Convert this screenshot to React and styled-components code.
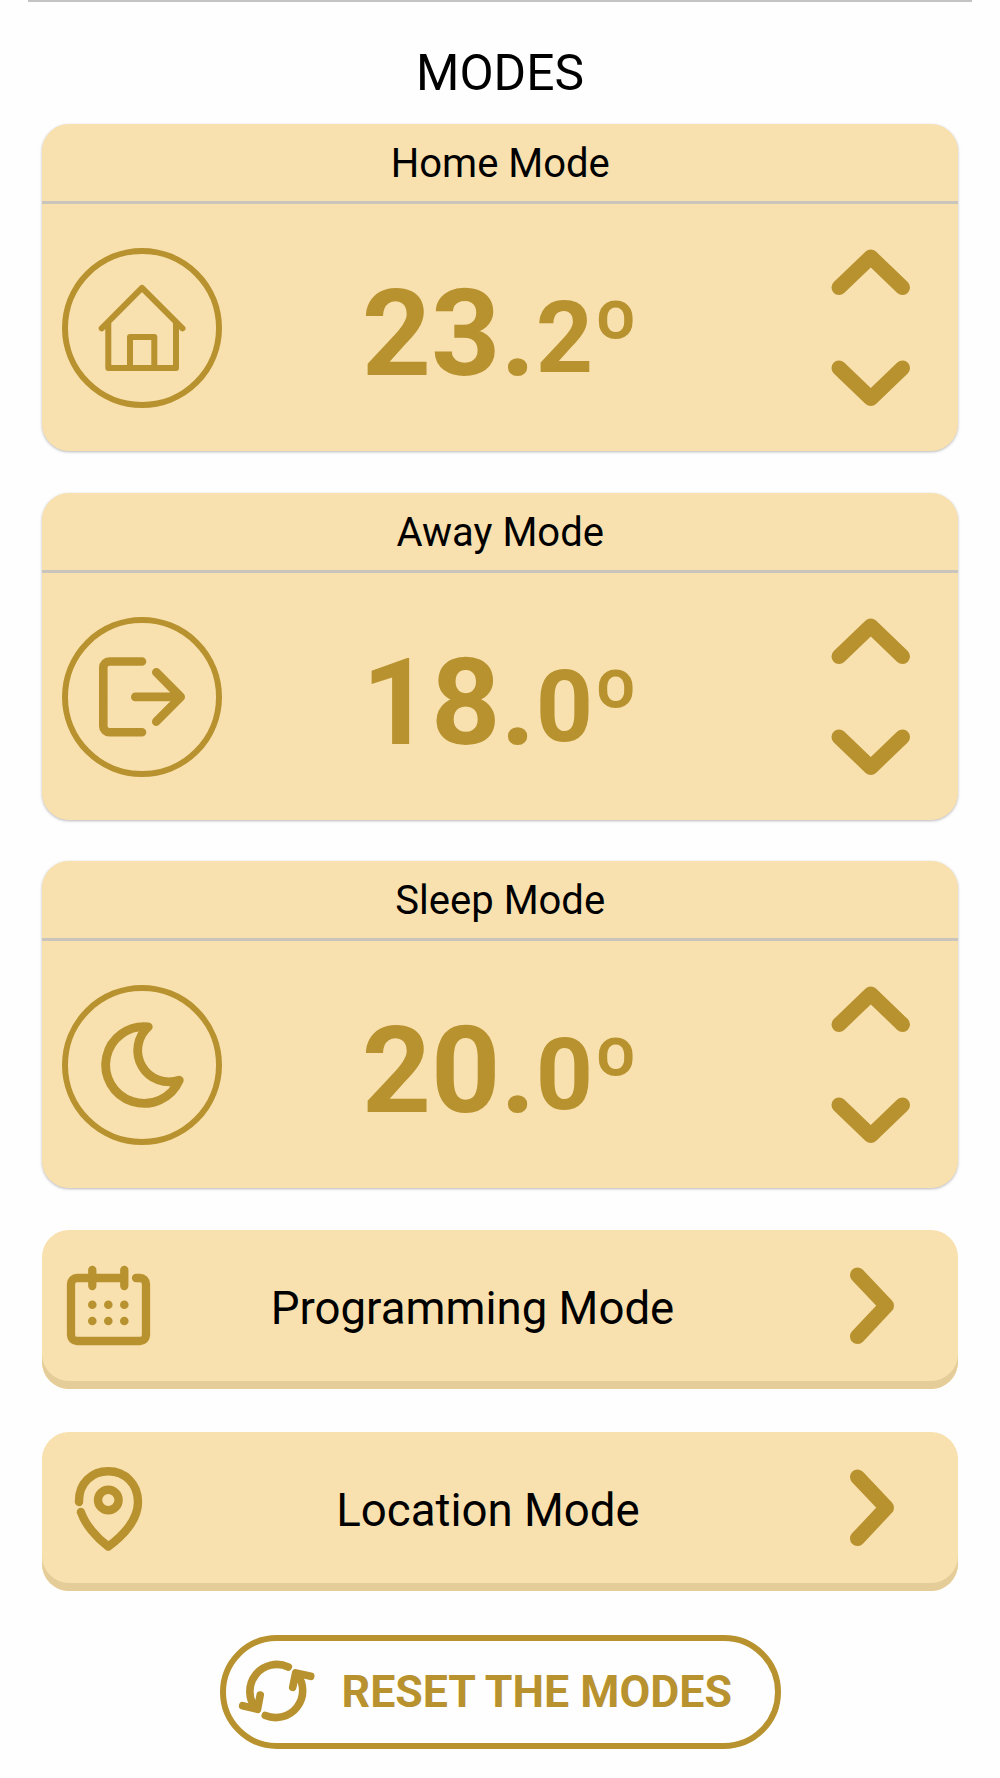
import React, { useState } from 'react';

import styled, { createGlobalStyle } from 'styled-components';

const gold = '#b8922f';
const sand = '#f9e1af';

const GlobalStyle = createGlobalStyle`
  body {
    margin: 0;
    background-color: #fefefe;
    color: #000;
    font-family: Roboto, "Liberation Sans", sans-serif;
  }
  * {
    box-sizing: border-box;
  }
`;

const Page = styled.main`
  display: flex;
  flex-direction: column;
  width: 1000px;
  height: 1778px;
  overflow: hidden;
`;

const TopLine = styled.div`
  flex: none;
  height: 2px;
  margin: 0 28px;
  background-color: #c4c4c4;
`;

const Title = styled.h1`
  margin: 42px 0 21.1px;
  font-size: 49.7px;
  line-height: 59px;
  font-weight: 400;
  text-align: center;
`;

const Cards = styled.section`
  display: flex;
  flex-direction: column;
  gap: 41.5px;
  padding: 0 42px 0 41.5px;
`;

const Card = styled.article`
  height: 327px;
  border-radius: 27px;
  background-color: ${sand};
  box-shadow: 0 1px 3px rgba(0, 0, 0, 0.28);
`;

const CardTitle = styled.h2`
  height: 80px;
  margin: 0;
  padding: 1px 0 0 1px;
  border-bottom: 3px solid #c9c5bd;
  font-size: 40px;
  line-height: 77px;
  font-weight: 400;
  text-align: center;
`;

const CardBody = styled.div`
  display: grid;
  grid-template-columns: 180px 1fr 180px;
  align-items: center;
  height: 247px;
  padding: 1px 20.5px 0;
`;

const ModeIcon = styled.div`
  display: flex;
  width: 160px;
  height: 160px;
  border: 6px solid ${gold};
  border-radius: 50%;

  svg {
    flex: none;
    margin: -6px;
  }
`;

const Temperature = styled.div`
  display: flex;
  justify-content: center;
  align-items: baseline;
  padding: 19px 0 0 1px;
  color: ${gold};
  font-weight: 700;
  font-size: 121px;
  line-height: 142px;
`;

const Decimal = styled.span`
  position: relative;
  top: -3px;
  font-size: 100px;
`;

const Arrows = styled.div`
  display: flex;
  flex-direction: column;
  align-items: center;
  gap: 64px;
  padding-left: 46px;
`;

const ArrowButton = styled.button`
  display: flex;
  padding: 0;
  border: 0;
  background: none;
  cursor: pointer;
`;

const Links = styled.nav`
  display: flex;
  flex-direction: column;
  gap: 43.5px;
  padding: 41.5px 42px 0;
`;

const LinkButton = styled.button`
  display: grid;
  grid-template-columns: 96px 1fr 154px;
  align-items: center;
  height: 159px;
  padding: 0 0 4px 18px;
  border: 0;
  border-radius: 27px;
  background-color: ${sand};
  box-shadow: inset 0 -8px 0 #e5cd9a;
  color: #000;
  font-family: inherit;
  font-size: 45.6px;
  cursor: pointer;

  > svg:last-child {
    justify-self: center;
    margin: 0 18px 5px 0;
  }
`;

const LinkLabel = styled.span`
  padding-top: 2px;
  padding-left: ${({ $short }) => ($short ? 16 : 0)}px;
  padding-right: ${({ $short }) => ($short ? 0 : 15)}px;
  white-space: nowrap;
`;

const ResetButton = styled.button`
  display: flex;
  align-items: center;
  align-self: center;
  width: 561px;
  height: 114px;
  margin-top: 43.5px;
  padding: 0 0 0 10px;
  border: 6px solid ${gold};
  border-radius: 57px;
  background: none;
  color: ${gold};
  font-family: inherit;
  font-weight: 700;
  font-size: 44.7px;
  cursor: pointer;

  svg {
    margin-right: 24px;
  }
`;

const Icon = ({ width, height, stroke, children }) => (
  <svg width={width} height={height} viewBox={`0 0 ${width} ${height}`} fill="none" stroke={gold}
    strokeWidth={stroke} strokeLinecap="round" strokeLinejoin="round">
    {children}
  </svg>
);

const House = () => (
  <Icon width={160} height={160} stroke={6}>
    <path d="M39.7 80.3L80 39.9l40.5 40.4M46.3 75v45H114V75M68 120V89h24.3v31" />
  </Icon>
);

const Exit = () => (
  <Icon width={160} height={160} stroke={8.6}>
    <path d="M80 44.5H47.3a6 6 0 0 0-6 6v58.8a6 6 0 0 0 6 6H80M73.3 79.9h45.2M94.3 55.3L118.7 79.9 94.3 104.6" />
  </Icon>
);

const Moon = () => (
  <Icon width={160} height={160} stroke={8.8}>
    <path d="M86.3 41.8A38.4 38.4 0 1 0 117.3 95.2A31.5 31.5 0 0 1 86.3 41.8Z" />
  </Icon>
);

const Calendar = () => (
  <Icon width={96} height={96} stroke={8.3}>
    <path d="M63 19H17a6 6 0 0 0-6 6v51a6 6 0 0 0 6 6h63a6 6 0 0 0 6-6V25a6 6 0 0 0-6-6h-4M32.3 11v16M64.3 11v16" />
    {[45.7, 62].map(y => [32.3, 48.3, 64.3].map(x => (
      <circle key={`${x}-${y}`} cx={x} cy={y} r="4.3" fill={gold} stroke="none" />
    )))}
  </Icon>
);

const Pin = () => (
  <Icon width={96} height={96} stroke={8.4}>
    <path d="M19 40C18.5 21 32 9.3 48.3 9.3C65 9.3 78 22 78 40C78 58 63 74 48.3 84.5C36 75.5 25 62 20.9 50" />
    <circle cx="48.3" cy="38" r="10.3" />
  </Icon>
);

const Refresh = () => (
  <Icon width={82} height={70} stroke={7.6}>
    <path d="M52.3 10A27 27 0 0 0 19.5 51M6.7 48.7L21.5 52.3L24.2 38" />
    <path d="M29.3 58.5A27 27 0 0 0 61 17M56.7 30.3L59.7 15.9L74.7 19.3" />
  </Icon>
);

const Up = () => (
  <Icon width={80} height={47} stroke={15}>
    <path d="M8 38.5L39.8 8L71.5 38.5" />
  </Icon>
);

const Down = () => (
  <Icon width={80} height={47} stroke={15}>
    <path d="M8 8L39.8 38.5L71.5 8" />
  </Icon>
);

const Right = () => (
  <Icon width={46} height={78} stroke={15}>
    <path d="M8.5 9L37.5 39.7L8.5 70.5" />
  </Icon>
);

const modes = [
  { name: 'Home Mode', icon: <House />, start: 232 },
  { name: 'Away Mode', icon: <Exit />, start: 180 },
  { name: 'Sleep Mode', icon: <Moon />, start: 200 },
];

const ModeCard = ({ name, icon, start }) => {
  // kept in tenths of a degree
  const [temp, setTemp] = useState(start);
  return (
    <Card>
      <CardTitle>{name}</CardTitle>
      <CardBody>
        <ModeIcon>{icon}</ModeIcon>
        <Temperature>
          <span>{Math.floor(temp / 10)}.</span>
          <Decimal>{temp % 10}º</Decimal>
        </Temperature>
        <Arrows>
          <ArrowButton onClick={() => setTemp(temp + 1)}><Up /></ArrowButton>
          <ArrowButton onClick={() => setTemp(temp - 1)}><Down /></ArrowButton>
        </Arrows>
      </CardBody>
    </Card>
  );
}

const App = () => {
  const [version, setVersion] = useState(0);
  return (
    <>
      <GlobalStyle />
      <Page>
        <TopLine />
        <Title>MODES</Title>
        <Cards>
          {modes.map(mode => <ModeCard key={`${mode.name}-${version}`} {...mode} />)}
        </Cards>
        <Links>
          <LinkButton>
            <Calendar />
            <LinkLabel>Programming Mode</LinkLabel>
            <Right />
          </LinkButton>
          <LinkButton>
            <Pin />
            <LinkLabel $short>Location Mode</LinkLabel>
            <Right />
          </LinkButton>
        </Links>
        <ResetButton onClick={() => setVersion(version + 1)}>
          <Refresh />
          <span>RESET THE MODES</span>
        </ResetButton>
      </Page>
    </>
  )
}

export default App;
